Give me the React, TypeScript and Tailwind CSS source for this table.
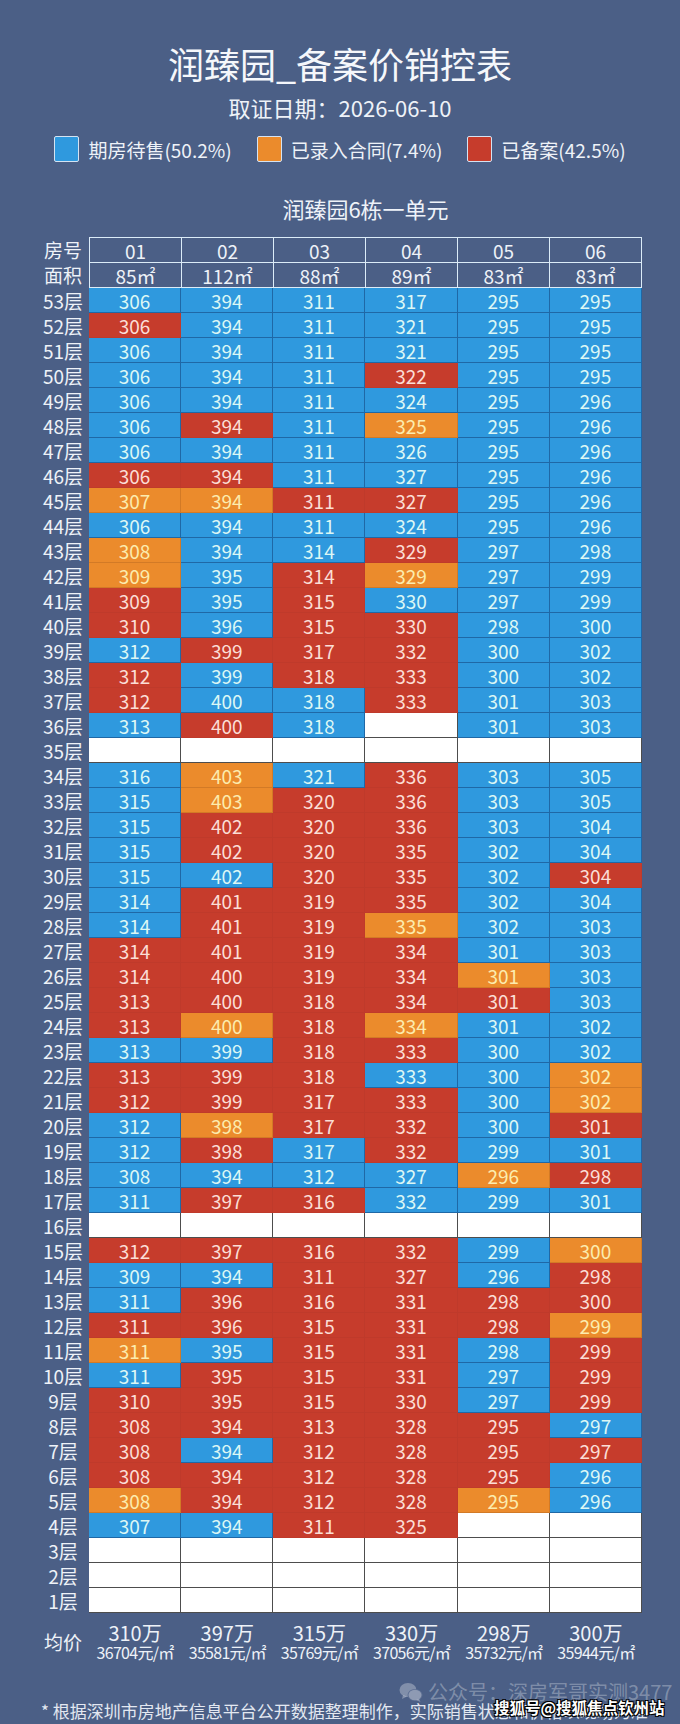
import React from "react";

type Status = "B" | "R" | "O" | "W";

// 01..06 per floor, price (万) + status letter, "-" = no unit
const floors: [number, string][] = [
  [53, "306B 394B 311B 317B 295B 295B"],
  [52, "306R 394B 311B 321B 295B 295B"],
  [51, "306B 394B 311B 321B 295B 295B"],
  [50, "306B 394B 311B 322R 295B 295B"],
  [49, "306B 394B 311B 324B 295B 296B"],
  [48, "306B 394R 311B 325O 295B 296B"],
  [47, "306B 394B 311B 326B 295B 296B"],
  [46, "306R 394R 311B 327B 295B 296B"],
  [45, "307O 394O 311R 327R 295B 296B"],
  [44, "306B 394B 311B 324B 295B 296B"],
  [43, "308O 394B 314B 329R 297B 298B"],
  [42, "309O 395B 314R 329O 297B 299B"],
  [41, "309R 395B 315R 330B 297B 299B"],
  [40, "310R 396B 315R 330R 298B 300B"],
  [39, "312B 399R 317R 332R 300B 302B"],
  [38, "312R 399B 318R 333R 300B 302B"],
  [37, "312R 400B 318B 333R 301B 303B"],
  [36, "313B 400R 318B - 301B 303B"],
  [35, "- - - - - -"],
  [34, "316B 403O 321B 336R 303B 305B"],
  [33, "315B 403O 320R 336R 303B 305B"],
  [32, "315B 402R 320R 336R 303B 304B"],
  [31, "315B 402R 320R 335R 302B 304B"],
  [30, "315B 402B 320R 335R 302B 304R"],
  [29, "314B 401R 319R 335R 302B 304B"],
  [28, "314B 401R 319R 335O 302B 303B"],
  [27, "314R 401R 319R 334R 301B 303B"],
  [26, "314R 400R 319R 334R 301O 303B"],
  [25, "313R 400R 318R 334R 301R 303B"],
  [24, "313R 400O 318R 334O 301B 302B"],
  [23, "313B 399B 318R 333R 300B 302B"],
  [22, "313R 399R 318R 333B 300B 302O"],
  [21, "312R 399R 317R 333R 300B 302O"],
  [20, "312B 398O 317R 332R 300B 301R"],
  [19, "312B 398R 317B 332R 299B 301B"],
  [18, "308B 394B 312B 327B 296O 298R"],
  [17, "311B 397R 316R 332B 299B 301B"],
  [16, "- - - - - -"],
  [15, "312R 397R 316R 332R 299B 300O"],
  [14, "309B 394B 311R 327R 296B 298R"],
  [13, "311B 396R 316R 331R 298R 300R"],
  [12, "311R 396R 315R 331R 298R 299O"],
  [11, "311O 395B 315R 331R 298B 299R"],
  [10, "311B 395R 315R 331R 297B 299R"],
  [9, "310R 395R 315R 330R 297B 299R"],
  [8, "308R 394R 313R 328R 295R 297B"],
  [7, "308R 394B 312R 328R 295R 297R"],
  [6, "308R 394R 312R 328R 295R 296B"],
  [5, "308O 394R 312R 328R 295O 296B"],
  [4, "307B 394B 311R 325R - -"],
  [3, "- - - - - -"],
  [2, "- - - - - -"],
  [1, "- - - - - -"],
];

const units = [
  { no: "01", area: "85㎡", total: "310万", per: "36704元/㎡" },
  { no: "02", area: "112㎡", total: "397万", per: "35581元/㎡" },
  { no: "03", area: "88㎡", total: "315万", per: "35769元/㎡" },
  { no: "04", area: "89㎡", total: "330万", per: "37056元/㎡" },
  { no: "05", area: "83㎡", total: "298万", per: "35732元/㎡" },
  { no: "06", area: "83㎡", total: "300万", per: "35944元/㎡" },
];

const cellStyle: Record<Status, string> = {
  B: "bg-[#2f99de] text-[#dcf7f5] border-[#1f68a6]",
  R: "bg-[#c63c2c] text-[#fbded6] border-[#bf3a2b]",
  O: "bg-[#eb8b2c] text-[#fcecae] border-[#d27a26]",
  W: "bg-white border-[#4d4d4d]",
};

function parseRow(s: string) {
  return s.split(" ").map((t) =>
    t === "-"
      ? { price: "", status: "W" as Status }
      : { price: t.slice(0, -1), status: t.slice(-1) as Status },
  );
}

function WechatIcon() {
  return (
    <svg width="24" height="21" viewBox="0 0 24 21" fill="currentColor">
      <ellipse cx="9" cy="8" rx="8.5" ry="7" />
      <path d="M4 13 L3 17 L8 14.5 Z" />
      <ellipse cx="16" cy="13" rx="7.5" ry="6" fill="#5d6f93" />
      <ellipse cx="16" cy="13" rx="6.5" ry="5.2" />
      <path d="M20 17 L21.5 20 L17 18 Z" />
    </svg>
  );
}

export default function App() {
  return (
    <div className="relative h-[1724px] w-[680px] overflow-hidden bg-[#4b5f86] font-['Noto_Sans_CJK_SC','Noto_Sans',sans-serif] text-[#eef2f8]">
      <h1 className="mt-[41px] text-center text-[36px] leading-[44px] font-normal text-[#f5f7fb]">
        润臻园_备案价销控表
      </h1>
      <div className="mt-[7px] text-center text-[22px] leading-[30px]">
        取证日期：2026-06-10
      </div>

      <div className="mt-[14px] flex h-[26px] items-center justify-center gap-[25px] text-[19px] leading-none">
        {[
          ["bg-[#2f99de]", "期房待售(50.2%)"],
          ["bg-[#eb8b2c]", "已录入合同(7.4%)"],
          ["bg-[#c63c2c]", "已备案(42.5%)"],
        ].map(([c, label]) => (
          <div key={label} className="flex items-center gap-[9px]">
            <span
              className={`h-[26px] w-[25px] rounded-[2px] border border-[#d5e3f2] ${c}`}
            />
            <span>{label}</span>
          </div>
        ))}
      </div>

      <div className="mt-[31px] ml-[89px] w-[553px] text-center text-[22px] leading-[30px]">
        润臻园6栋一单元
      </div>

      <div className="mt-[14px] ml-[37px] text-[19px] leading-none">
        {/* header: 房号 / 面积 */}
        <div className="flex">
          <div className="flex w-[52px] flex-col">
            <div className="flex h-[25px] items-center justify-center">房号</div>
            <div className="flex h-[25px] items-center justify-center">面积</div>
          </div>
          <div className="grid w-[553px] grid-cols-6 border-t border-l border-[#dcecf8]">
            {units.map((u) => (
              <div
                key={`no-${u.no}`}
                className="flex h-[25px] items-center justify-center border-r border-b border-[#dcecf8]"
              >
                {u.no}
              </div>
            ))}
            {units.map((u) => (
              <div
                key={`area-${u.no}`}
                className="flex h-[25px] items-center justify-center border-r border-b border-[#dcecf8]"
              >
                {u.area}
              </div>
            ))}
          </div>
        </div>

        {floors.map(([floor, data]) => (
          <div key={floor} className="flex">
            <div className="flex h-[25px] w-[52px] items-center justify-center">
              {floor}层
            </div>
            <div className="grid w-[553px] grid-cols-6">
              {parseRow(data).map((cell, i) => (
                <div
                  key={`${floor}-${i}`}
                  className={`flex h-[25px] items-center justify-center border-r border-b ${cellStyle[cell.status]}`}
                >
                  {cell.price}
                </div>
              ))}
            </div>
          </div>
        ))}

        {/* 均价 */}
        <div className="mt-[9px] flex">
          <div className="flex w-[52px] items-center justify-center">均价</div>
          <div className="grid w-[553px] grid-cols-6">
            {units.map((u) => (
              <div key={`avg-${u.no}`} className="flex flex-col items-center">
                <span className="text-[20px] leading-[21px]">{u.total}</span>
                <span className="text-[16px] leading-[18px] tracking-[-0.7px]">
                  {u.per}
                </span>
              </div>
            ))}
          </div>
        </div>
      </div>

      <div className="mt-[38px] ml-[41px] text-[17px] leading-[24px] whitespace-nowrap text-[#e3e8f1]">
        * 根据深圳市房地产信息平台公开数据整理制作，实际销售状态和价格以现场为准
      </div>

      {/* watermarks */}
      <div className="absolute top-[1680px] left-[399px] flex items-center gap-[5px] text-[20px] leading-[24px] text-white/30">
        <WechatIcon />
        <span>公众号：深房军哥实测3477</span>
      </div>
      <div className="absolute top-[1696px] left-[494px] text-[15.5px] leading-[22px] font-bold text-white [text-shadow:1px_1px_0_#000,-1px_-1px_0_#000,1px_-1px_0_#000,-1px_1px_0_#000]">
        搜狐号@搜狐焦点钦州站
      </div>
    </div>
  );
}
